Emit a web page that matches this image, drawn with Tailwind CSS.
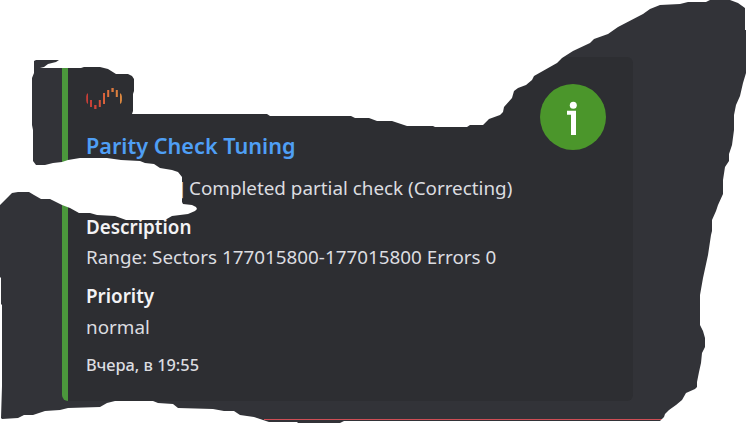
<!DOCTYPE html>
<html lang="ru">
<head>
    <meta charset="UTF-8">
    <meta name="viewport" content="width=device-width, initial-scale=1.0">
    <title>Parity Check Tuning</title>
    <script src="https://cdn.jsdelivr.net/npm/@tailwindcss/browser@4"></script>
</head>
<body class="relative w-[746px] h-[423px] overflow-hidden bg-[#323338] font-['Noto_Sans','Open_Sans',sans-serif]">
    <!-- Embed card -->
    <div class="pt-[57px] pl-[62px] h-[419px]">
        <div class="flex justify-between w-[571px] h-[344px] pl-[18px] pr-[27px] rounded-[6px] border-l-[6px] border-[#4b973c] bg-[#2d2e32] text-[18.83px] text-[#dcdde0] whitespace-nowrap">
            <div class="flex flex-col pt-[29px]">
                <!-- Unraid wave -->
                <svg class="w-[38px] h-[24px]" viewBox="86 86 38 24">
                    <defs>
                        <linearGradient id="wave" gradientUnits="userSpaceOnUse" x1="86" y1="0" x2="122" y2="0">
                            <stop offset="0" stop-color="#c53c36"/>
                            <stop offset="0.3" stop-color="#cf4539"/>
                            <stop offset="0.6" stop-color="#df6f3c"/>
                            <stop offset="1" stop-color="#dc8a40"/>
                        </linearGradient>
                    </defs>
                    <path fill="url(#wave)" d="M88 93v11q-1.800-1-1.800-3.500v-4q0-2.500 1.800-3.500zM90 100h2v7h-2zM94.200 105h2.300v4h-2.300zM98.800 100h2v7h-2zM103 93h2v11h-2zM107.200 90h2v7h-2zM111.400 88h2.300v4h-2.300zM115.800 90h2v7h-2zM120 93q1.900 1 1.900 3.500v4q0 2.500-1.900 3.500z"/>
                </svg>
                <h1 class="mt-[20px] h-[32px] leading-[32px] text-[21.65px] font-semibold text-[#4f9ff5]">Parity Check Tuning</h1>
                <p class="mt-[12px] ml-[92px] h-[28px] leading-[28px] flex"><span class="w-[11px]">]</span><span>Completed partial check (Correcting)</span></p>
                <h2 class="mt-[11px] h-[28px] leading-[28px] font-semibold text-[#f3f3f5]">Description</h2>
                <p class="mt-[2px] h-[28px] leading-[28px]">Range: Sectors 177015800-177015800 Errors 0</p>
                <h2 class="mt-[11px] h-[28px] leading-[28px] font-semibold text-[#f3f3f5]">Priority</h2>
                <p class="mt-[3px] h-[28px] leading-[28px]">normal</p>
                <p class="mt-[12px] h-[24px] leading-[24px] text-[16.35px] font-medium">Вчера, в 19:55</p>
            </div>
            <!-- Info badge -->
            <svg class="mt-[27px] w-[66px] h-[66px] shrink-0" viewBox="540 84 66 66">
                <circle cx="573" cy="117" r="33" fill="#4b962b"/>
                <circle cx="573.3" cy="105.2" r="3.500" fill="#fff"/>
                <path fill="#fff" d="M567 110.700h9v24.300h-5v-20.300h-4z"/>
            </svg>
        </div>
    </div>
    <div class="ml-[264px] w-[399px] h-px bg-[#cf4e55]"></div>

    <!-- Brushed-out area over the screen -->
    <svg class="absolute inset-0 w-[746px] h-[423px]" viewBox="0 0 746 423">
        <path fill="#fff" fill-rule="evenodd" d="M0 0H746V423H0Z
            M34 61L36 60H59L56 62L48 64L44 67L40 68H81L84 67H100L108 69L116 74H128L132 76L134 79V91L133 94V111L132 114H267L270 116H351L355 118H369L377 121H392L401 124L407 126H433L435 127H467L470 125H483L489 119L500 115L503 112L504 107L512 98L514 91L518 88L526 85L532 80L534 76L557 63L562 58L573 51L590 43L594 39L608 34L618 27L643 14L650 9L660 5L680 4L688 2H706L710 0H730L738 3L745 8V30H746V73L743 83L740 96L736 105L734 115V130L732 145L729 154V161L725 167L723 180V194L718 205L716 211L712 220V231L711 235L708 255L703 278L700 295V325L703 331L705 338V347L702 353L701 363L699 372L697 382V387L695 389L686 393L682 400L676 405L669 410L665 414L664 417L660 421H344L340 423H298L297 422H269L263 420L254 417L240 415L234 411H224L213 409L178 408L173 404L158 403L153 401H115L107 403L100 407L68 408L60 410L45 411L33 415H24L18 418L2 419L1 418L2 386V305L1 304V278L0 277
            V205L10 195L12 193L18 192H29L34 195L41 199H50L62 205L70 208L79 213H90L97 215L115 216L126 220H165L172 216L188 214L195 211L197 209L196 207L192 205L183 204L182 202V177L178 172L172 170L160 168L154 164L145 163L140 161L121 160L107 158H80L68 160L62 162L53 163L45 165H36L33 161V130L32 125V78L34 73Z"/>
    </svg>
</body>
</html>
